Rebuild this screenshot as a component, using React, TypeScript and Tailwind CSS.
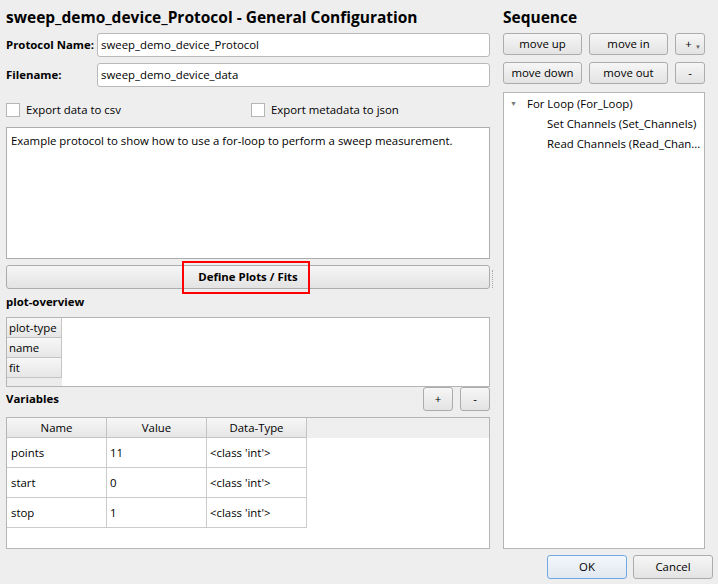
import React from 'react';

const btn =
    'flex items-center justify-center rounded-[3px] border border-[#acacac] bg-linear-to-b from-[#f6f6f6] to-[#e3e3e3] text-black whitespace-nowrap';

const hdrCell =
    'border-r border-b border-[#c4c4c4] bg-linear-to-b from-[#f7f7f7] to-[#e6e6e6] whitespace-nowrap overflow-hidden';

const variables = [
    { name: 'points', value: '11', type: "<class 'int'>" },
    { name: 'start', value: '0', type: "<class 'int'>" },
    { name: 'stop', value: '1', type: "<class 'int'>" },
];

const Checkbox: React.FC<{ label: string }> = ({ label }) => (
    <div className="flex items-center gap-[6px] whitespace-nowrap">
        <div className="w-[14px] h-[14px] border border-[#b5b5b5] bg-white" />
        <span>{label}</span>
    </div>
);

export default function App() {
    return (
        <div className="w-[718px] h-[584px] bg-[#eeeeee] flex flex-col overflow-hidden font-['Open_Sans',sans-serif] text-[11.4px] text-black">
            <div className="flex pl-[6px] pt-[5px]">
                {/* Left: general configuration */}
                <div className="w-[484px] flex flex-col">
                    <div className="h-[24px] leading-[24px] text-[15.5px] font-bold whitespace-nowrap">
                        sweep_demo_device_Protocol - General Configuration
                    </div>

                    <div className="mt-[4px] h-[24px] flex items-center">
                        <span className="w-[91px] shrink-0 font-bold whitespace-nowrap">Protocol Name:</span>
                        <div className="flex-1 h-full flex items-center px-[3px] bg-white border border-[#b9b9b9] rounded-[3px]">
                            sweep_demo_device_Protocol
                        </div>
                    </div>
                    <div className="mt-[6px] h-[24px] flex items-center">
                        <span className="w-[91px] shrink-0 font-bold">Filename:</span>
                        <div className="flex-1 h-full flex items-center px-[3px] bg-white border border-[#b9b9b9] rounded-[3px]">
                            sweep_demo_device_data
                        </div>
                    </div>

                    <div className="mt-[10px] h-[26px] flex items-center">
                        <div className="w-[245px]">
                            <Checkbox label="Export data to csv" />
                        </div>
                        <Checkbox label="Export metadata to json" />
                    </div>

                    <div className="mt-[4px] h-[132px] bg-white border border-[#adadad] px-[4px] pt-[4px]">
                        Example protocol to show how to use a for-loop to perform a sweep measurement.
                    </div>

                    <div className="relative mt-[6px]">
                        <div className={`${btn} h-[24px] font-bold`}>Define Plots / Fits</div>
                        <div className="absolute left-[176px] top-[-4px] w-[128px] h-[33px] border-2 border-[#ff0000]" />
                    </div>

                    <div className="mt-[3px] h-[20px] leading-[20px] font-bold">plot-overview</div>
                    <div className="mt-[5px] h-[70px] border border-[#b5b5b5] bg-white flex">
                        <div className="w-[55px] flex flex-col bg-[#ececec]">
                            {['plot-type', 'name', 'fit'].map((h) => (
                                <div key={h} className={`${hdrCell} h-[20px] leading-[19px] px-[2px]`}>
                                    {h}
                                </div>
                            ))}
                        </div>
                        <div className="flex-1" />
                    </div>

                    <div className="h-[24px] flex items-center">
                        <span className="flex-1 font-bold">Variables</span>
                        <div className="flex gap-[7px]">
                            <div className={`${btn} w-[30px] h-[24px]`}>+</div>
                            <div className={`${btn} w-[30px] h-[24px]`}>-</div>
                        </div>
                    </div>

                    <div className="mt-[6px] h-[132px] border border-[#b5b5b5] bg-white flex flex-col">
                        <div className="flex h-[20px] bg-[#efefef]">
                            {['Name', 'Value', 'Data-Type'].map((h) => (
                                <div key={h} className={`${hdrCell} w-[100px] flex items-center justify-center`}>
                                    {h}
                                </div>
                            ))}
                        </div>
                        {variables.map((v) => (
                            <div key={v.name} className="flex h-[30px]">
                                <div className="w-[100px] border-r border-b border-[#cbcbcb] flex items-center px-[4px]">{v.name}</div>
                                <div className="w-[100px] border-r border-b border-[#cbcbcb] flex items-center px-[3px]">{v.value}</div>
                                <div className="w-[100px] border-r border-b border-[#cbcbcb] flex items-center px-[3px] whitespace-nowrap">{v.type}</div>
                            </div>
                        ))}
                    </div>
                </div>

                {/* Splitter handle */}
                <div className="w-[13px] pt-[265px] pl-[2px]">
                    <div className="h-[18px] w-0 border-l border-dotted border-[#a8a8a8]" />
                </div>

                {/* Right: sequence */}
                <div className="w-[202px] flex flex-col">
                    <div className="h-[24px] leading-[24px] text-[15.5px] font-bold">Sequence</div>
                    <div className="mt-[4px] flex gap-[7px]">
                        <div className={`${btn} w-[79px] h-[22px]`}>move up</div>
                        <div className={`${btn} w-[79px] h-[22px]`}>move in</div>
                        <div className={`${btn} w-[30px] h-[22px] relative`}>
                            <span className="-ml-[3px]">+</span>
                            <span className="absolute right-[3px] bottom-[4px] text-[6px] leading-none text-[#666]">▼</span>
                        </div>
                    </div>
                    <div className="mt-[7px] flex gap-[7px]">
                        <div className={`${btn} w-[79px] h-[22px]`}>move down</div>
                        <div className={`${btn} w-[79px] h-[22px]`}>move out</div>
                        <div className={`${btn} w-[30px] h-[22px]`}>-</div>
                    </div>
                    <div className="mt-[8px] h-[457px] bg-white border border-[#b5b5b5] pt-[1px] whitespace-nowrap overflow-hidden">
                        <div className="h-[20px] flex items-center">
                            <span className="w-[23px] pl-[6px] text-[7px] text-[#777]">▼</span>
                            <span>For Loop (For_Loop)</span>
                        </div>
                        <div className="h-[20px] flex items-center pl-[43px]">Set Channels (Set_Channels)</div>
                        <div className="h-[20px] flex items-center pl-[43px]">Read Channels (Read_Chan...</div>
                    </div>
                </div>
            </div>

            <div className="mt-[6px] flex justify-end gap-[6px] pr-[5px]">
                <div className="w-[80px] h-[24px] flex items-center justify-center rounded-[3px] border border-[#6fa8e6] bg-linear-to-b from-[#f3f7fc] to-[#e2e8f0]">
                    OK
                </div>
                <div className={`${btn} w-[80px] h-[24px]`}>Cancel</div>
            </div>
        </div>
    );
}
